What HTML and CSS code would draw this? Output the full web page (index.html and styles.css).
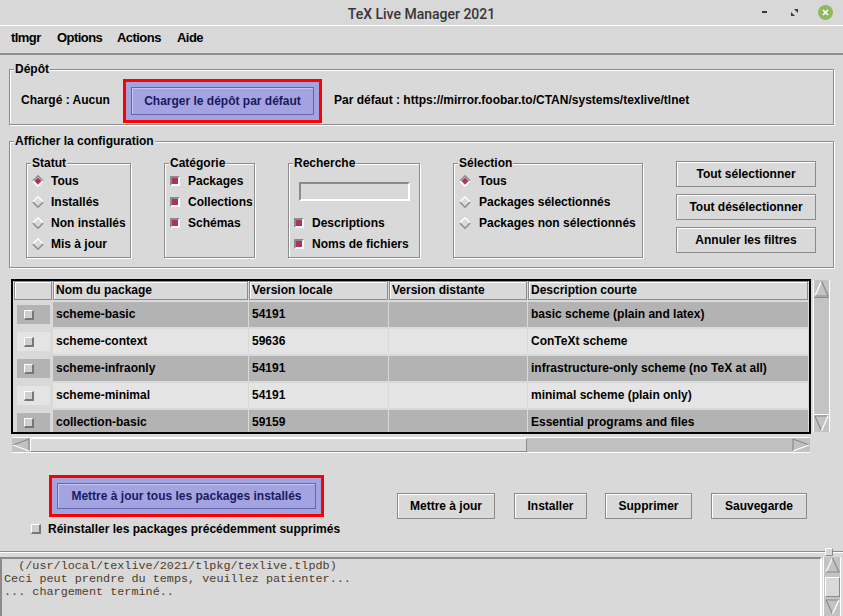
FILE: index.html
```html
<!DOCTYPE html>
<html lang="fr">
<head>
<meta charset="utf-8">
<title>TeX Live Manager 2021</title>
<link rel="stylesheet" href="styles.css">
</head>
<body>
<div class="titlebar">
  <span class="title">TeX Live Manager 2021</span>
  <div class="wm">
    <span class="wm-min"></span>
    <svg class="wm-max" width="7" height="7" viewBox="0 0 7 7"><path d="M3 0 H7 V4 Z M0 3 V7 H4 Z" fill="#3a3a3a"/></svg>
    <svg class="wm-close" width="15" height="15" viewBox="0 0 15 15"><circle cx="7.5" cy="7.5" r="7.5" fill="#8fb95f"/><path d="M5 5 L10 10 M10 5 L5 10" stroke="#fff" stroke-width="1.6"/></svg>
  </div>
</div>
<nav class="menubar">
  <span class="m1">tlmgr</span><span class="m2">Options</span><span class="m3">Actions</span><span class="m4">Aide</span>
</nav>
<main class="content">
  <section class="group depot">
    <span class="group-title">Dépôt</span>
    <div class="depot-row">
      <span class="loaded">Chargé : Aucun</span>
      <div class="hl hl-depot"><div class="btn-lav">Charger le dépôt par défaut</div></div>
      <span class="default-url">Par défaut : https://mirror.foobar.to/CTAN/systems/texlive/tlnet</span>
    </div>
  </section>

  <section class="group config">
    <span class="group-title">Afficher la configuration</span>
    <div class="config-row">
      <div class="group sub statut">
        <span class="group-title">Statut</span>
        <div class="opt"><svg class="radio" width="12" height="12" viewBox="0 0 12 12"><path d="M0.8 6 L6 0.8 L11.2 6" fill="none" stroke="#8a8a8a" stroke-width="1.4"/><path d="M0.8 6 L6 11.2 L11.2 6" fill="none" stroke="#fff" stroke-width="1.4"/><path d="M6 2.6 L9.4 6 L6 9.4 L2.6 6 Z" fill="#b03060"/></svg>Tous</div>
        <div class="opt"><svg class="radio" width="12" height="12" viewBox="0 0 12 12"><path d="M0.8 6 L6 0.8 L11.2 6" fill="none" stroke="#fff" stroke-width="1.4"/><path d="M0.8 6 L6 11.2 L11.2 6" fill="none" stroke="#8a8a8a" stroke-width="1.4"/></svg>Installés</div>
        <div class="opt"><svg class="radio" width="12" height="12" viewBox="0 0 12 12"><path d="M0.8 6 L6 0.8 L11.2 6" fill="none" stroke="#fff" stroke-width="1.4"/><path d="M0.8 6 L6 11.2 L11.2 6" fill="none" stroke="#8a8a8a" stroke-width="1.4"/></svg>Non installés</div>
        <div class="opt"><svg class="radio" width="12" height="12" viewBox="0 0 12 12"><path d="M0.8 6 L6 0.8 L11.2 6" fill="none" stroke="#fff" stroke-width="1.4"/><path d="M0.8 6 L6 11.2 L11.2 6" fill="none" stroke="#8a8a8a" stroke-width="1.4"/></svg>Mis à jour</div>
      </div>
      <div class="group sub categorie">
        <span class="group-title">Catégorie</span>
        <div class="opt opt-cb"><span class="cb"></span>Packages</div>
        <div class="opt opt-cb"><span class="cb"></span>Collections</div>
        <div class="opt opt-cb"><span class="cb"></span>Schémas</div>
      </div>
      <div class="group sub recherche">
        <span class="group-title">Recherche</span>
        <div class="entry-slot"><div class="entry"></div></div>
        <div class="opt opt-cb"><span class="cb"></span>Descriptions</div>
        <div class="opt opt-cb"><span class="cb"></span>Noms de fichiers</div>
      </div>
      <div class="group sub selection">
        <span class="group-title">Sélection</span>
        <div class="opt"><svg class="radio" width="12" height="12" viewBox="0 0 12 12"><path d="M0.8 6 L6 0.8 L11.2 6" fill="none" stroke="#8a8a8a" stroke-width="1.4"/><path d="M0.8 6 L6 11.2 L11.2 6" fill="none" stroke="#fff" stroke-width="1.4"/><path d="M6 2.6 L9.4 6 L6 9.4 L2.6 6 Z" fill="#b03060"/></svg>Tous</div>
        <div class="opt"><svg class="radio" width="12" height="12" viewBox="0 0 12 12"><path d="M0.8 6 L6 0.8 L11.2 6" fill="none" stroke="#fff" stroke-width="1.4"/><path d="M0.8 6 L6 11.2 L11.2 6" fill="none" stroke="#8a8a8a" stroke-width="1.4"/></svg>Packages sélectionnés</div>
        <div class="opt"><svg class="radio" width="12" height="12" viewBox="0 0 12 12"><path d="M0.8 6 L6 0.8 L11.2 6" fill="none" stroke="#fff" stroke-width="1.4"/><path d="M0.8 6 L6 11.2 L11.2 6" fill="none" stroke="#8a8a8a" stroke-width="1.4"/></svg>Packages non sélectionnés</div>
      </div>
      <div class="side-buttons">
        <div class="btn">Tout sélectionner</div>
        <div class="btn">Tout désélectionner</div>
        <div class="btn">Annuler les filtres</div>
      </div>
    </div>
  </section>

  <div class="table-area">
    <div class="table-frame">
      <div class="grid">
        <div class="th"></div>
        <div class="th">Nom du package</div>
        <div class="th">Version locale</div>
        <div class="th">Version distante</div>
        <div class="th">Description courte</div>

        <div class="td-cb dark"><span class="cbw"><span class="cb-off"></span></span></div>
        <div class="td dark">scheme-basic</div>
        <div class="td dark">54191</div>
        <div class="td dark"></div>
        <div class="td dark">basic scheme (plain and latex)</div>

        <div class="td-cb light"><span class="cbw"><span class="cb-off"></span></span></div>
        <div class="td light">scheme-context</div>
        <div class="td light">59636</div>
        <div class="td light"></div>
        <div class="td light">ConTeXt scheme</div>

        <div class="td-cb dark"><span class="cbw"><span class="cb-off"></span></span></div>
        <div class="td dark">scheme-infraonly</div>
        <div class="td dark">54191</div>
        <div class="td dark"></div>
        <div class="td dark">infrastructure-only scheme (no TeX at all)</div>

        <div class="td-cb light"><span class="cbw"><span class="cb-off"></span></span></div>
        <div class="td light">scheme-minimal</div>
        <div class="td light">54191</div>
        <div class="td light"></div>
        <div class="td light">minimal scheme (plain only)</div>

        <div class="td-cb dark"><span class="cbw"><span class="cb-off"></span></span></div>
        <div class="td dark">collection-basic</div>
        <div class="td dark">59159</div>
        <div class="td dark"></div>
        <div class="td dark">Essential programs and files</div>
      </div>
    </div>
    <div class="vscroll">
      <svg class="arrow" width="15" height="17" viewBox="0 0 15 17"><path d="M1 16 L7.5 1" stroke="#fff" stroke-width="1.2" fill="none"/><path d="M7.5 1 L14 16 L1 16" stroke="#8a8a8a" stroke-width="1.2" fill="none"/></svg>
      <div class="vthumb"></div>
      <svg class="arrow" width="15" height="17" viewBox="0 0 15 17"><path d="M1 1 L14 1 M1 1 L7.5 16" stroke="#8a8a8a" stroke-width="1.2" fill="none"/><path d="M7.5 16 L14 1" stroke="#fff" stroke-width="1.2" fill="none"/></svg>
    </div>
  </div>

  <div class="hscroll">
    <svg class="harrow" width="18" height="14" viewBox="0 0 18 14"><path d="M1 7 L17 1 L17 13" stroke="#8a8a8a" stroke-width="1.2" fill="none"/><path d="M1 7 L17 13" stroke="#fff" stroke-width="1.2" fill="none"/></svg>
    <div class="hthumb"></div>
    <div class="htrough"></div>
    <svg class="harrow" width="18" height="14" viewBox="0 0 18 14"><path d="M1 1 L17 7 M1 1 L1 13" stroke="#8a8a8a" stroke-width="1.2" fill="none"/><path d="M1 13 L17 7" stroke="#fff" stroke-width="1.2" fill="none"/></svg>
  </div>

  <div class="bottom">
    <div class="upd-col">
      <div class="hl hl-upd"><div class="btn-lav">Mettre à jour tous les packages installés</div></div>
      <div class="reinstall"><span class="cb-off"></span>Réinstaller les packages précédemment supprimés</div>
    </div>
    <div class="action-buttons">
      <div class="btn w-maj">Mettre à jour</div>
      <div class="btn w-inst">Installer</div>
      <div class="btn w-supp">Supprimer</div>
      <div class="btn w-sauv">Sauvegarde</div>
    </div>
  </div>
</main>
<div class="sep"><span class="sash"></span></div>
<div class="log-pane">
  <pre class="log">  (/usr/local/texlive/2021/tlpkg/texlive.tlpdb)
Ceci peut prendre du temps, veuillez patienter...
... chargement terminé..</pre>
  <div class="vscroll log-scroll">
    <svg class="arrow" width="15" height="16" viewBox="0 0 15 16"><path d="M1 15 L7.5 1" stroke="#fff" stroke-width="1.2" fill="none"/><path d="M7.5 1 L14 15 L1 15" stroke="#8a8a8a" stroke-width="1.2" fill="none"/></svg>
    <div class="lthumb"></div>
    <svg class="arrow" width="15" height="16" viewBox="0 0 15 16"><path d="M1 1 L14 1 M1 1 L7.5 15" stroke="#8a8a8a" stroke-width="1.2" fill="none"/><path d="M7.5 15 L14 1" stroke="#fff" stroke-width="1.2" fill="none"/></svg>
  </div>
</div>
</body>
</html>
```
FILE: styles.css
```css
* { box-sizing: border-box; }
html, body { margin: 0; padding: 0; }
body {
  width: 843px;
  height: 616px;
  overflow: hidden;
  background: #d9d9d9;
  color: #000;
  font: bold 12px/14px "Liberation Sans", Arial, sans-serif;
}

/* title bar */
.titlebar {
  height: 26px;
  display: grid;
  grid-template-columns: 1fr auto 1fr;
  align-items: center;
  background: #d8d8d8;
  border-bottom: 1px solid #fff;
}
.title {
  grid-column: 2;
  font: 500 14px/16px "Roboto", "DejaVu Sans", sans-serif;
  color: #363636;
  padding-top: 2px;
}
.wm {
  grid-column: 3;
  justify-self: end;
  display: flex;
  align-items: center;
  padding-right: 10px;
  padding-bottom: 1px;
}
.wm-min {
  width: 5px;
  height: 2px;
  background: #3a3a3a;
  margin-right: 24px;
}
.wm-max { margin-right: 20px; }

/* menubar */
.menubar {
  height: 29px;
  display: flex;
  align-items: center;
  padding: 0 0 3px 11px;
  border-bottom: 2px solid #8e8e8e;
  font: bold 13px/16px "Liberation Sans", Arial, sans-serif;
  letter-spacing: -0.55px;
}
.m1 { width: 46px; }
.m2 { width: 60px; }
.m3 { width: 60px; }

/* content */
.content { padding: 14px 9px 0 9px; }

.group {
  position: relative;
  border: 1px solid #8c8c8c;
  box-shadow: inset 1px 1px 0 #fff, 1px 1px 0 #fff;
}
.group-title {
  position: absolute;
  top: -8px;
  left: 4px;
  padding: 0 1px;
  background: #d9d9d9;
  line-height: 14px;
  white-space: nowrap;
}

.depot-row {
  height: 54px;
  padding: 9px 0 0 11px;
  display: flex;
  align-items: flex-start;
}
.loaded { width: 102px; margin-top: 14px; }
.default-url { margin-left: 12px; margin-top: 14px; white-space: nowrap; }

.hl {
  border: 3px solid #ff0000;
  background: #a3a3e1;
  padding: 5px;
  display: flex;
}
.hl-depot { width: 199px; height: 44px; }
.hl-upd { width: 275px; height: 42px; margin-left: 18px; }
.btn-lav {
  flex: 1;
  display: flex;
  align-items: center;
  justify-content: center;
  border: 1px solid #6464ac;
  box-shadow: inset 1px 1px 0 #c6c6f2;
  color: #1a1a5e;
  white-space: nowrap;
}

.config { margin-top: 16px; }
.config-row {
  display: flex;
  align-items: flex-start;
  gap: 33px;
  padding: 21px 0 9px 16px;
}
.sub { height: 95px; padding: 6px 0 3px 5px; }
.statut { width: 105px; }
.categorie { width: 91px; }
.recherche { width: 132px; }
.selection { width: 190px; }

.opt {
  height: 21px;
  display: flex;
  align-items: center;
  white-space: nowrap;
}
.radio { flex: none; margin-right: 7px; }
.selection .radio { margin-right: 8px; }
.cb {
  flex: none;
  width: 10px;
  height: 10px;
  margin-right: 8px;
  border: 2px solid;
  border-color: #8a8a8a #fff #fff #8a8a8a;
  background: #b03060;
}
.entry-slot {
  height: 42px;
  display: flex;
  align-items: center;
  padding-left: 5px;
}
.entry {
  width: 111px;
  height: 19px;
  border: 2px solid;
  border-color: #8a8a8a #fff #fff #8a8a8a;
}

.side-buttons {
  width: 140px;
  margin-top: -2px;
  display: flex;
  flex-direction: column;
  gap: 7px;
}
.btn {
  height: 26px;
  display: flex;
  align-items: center;
  justify-content: center;
  border: 1px solid #8a8a8a;
  box-shadow: inset 1px 1px 0 #fff;
  white-space: nowrap;
}

/* table */
.table-area {
  margin-top: 11px;
  display: flex;
  align-items: flex-start;
}
.table-frame {
  width: 800px;
  height: 155px;
  margin-left: 2px;
  border: 2px solid #000;
  overflow: hidden;
}
.grid {
  display: grid;
  grid-template-columns: 38px 195px 139px 138px 280px;
  grid-template-rows: 19px;
  grid-auto-rows: 25px;
  column-gap: 1px;
  row-gap: 2px;
  padding: 0 1px;
}
.th {
  border: 1px solid #8c8c8c;
  box-shadow: inset 1px 1px 0 #fff;
  padding-left: 2px;
  padding-bottom: 1px;
  display: flex;
  align-items: center;
  white-space: nowrap;
}
.td {
  display: flex;
  align-items: center;
  padding-left: 3px;
  padding-bottom: 1px;
  white-space: nowrap;
}
.dark { background: #b3b3b3; }
.light { background: #e4e4e4; }
.td-cb {
  background: #d9d9d9 !important;
  display: flex;
  align-items: center;
  justify-content: center;
}
.cbw {
  width: 33px;
  height: 19px;
  display: flex;
  align-items: center;
  padding-left: 7px;
}
.dark .cbw { background: #b3b3b3; }
.light .cbw { background: #e4e4e4; }
.cb-off {
  flex: none;
  width: 10px;
  height: 10px;
  border: 1px solid;
  border-width: 1px 2px 2px 1px;
  border-color: #fff #777 #777 #fff;
  background: #cfcfcf;
}

.vscroll {
  width: 17px;
  height: 152px;
  margin: 1px 0 0 2px;
  display: flex;
  flex-direction: column;
  align-items: center;
  background: #c3c3c3;
  border-left: 1px solid #fff;
  border-right: 1px solid #fff;
}
.arrow { flex: none; display: block; }
.vthumb {
  flex: 1;
  width: 15px;
  border-top: 1px solid #8a8a8a;
  border-bottom: 1px solid #fff;
}

.hscroll {
  width: 798px;
  height: 16px;
  margin: 3px 0 0 3px;
  display: flex;
  align-items: center;
  background: #c1c1c1;
  border-top: 1px solid #fff;
  border-bottom: 1px solid #fff;
}
.harrow { flex: none; display: block; }
.hthumb {
  width: 497px;
  height: 14px;
  background: #d9d9d9;
  border: 1px solid;
  border-color: #fff #8a8a8a #8a8a8a #fff;
}
.htrough { flex: 1; }

/* bottom */
.bottom {
  height: 76px;
  margin-top: 22px;
  display: flex;
  align-items: flex-start;
  padding-left: 22px;
}
.upd-col { display: flex; flex-direction: column; }
.reinstall {
  height: 14px;
  margin-top: 5px;
  display: flex;
  align-items: center;
  white-space: nowrap;
}
.reinstall .cb-off { margin-right: 7px; }
.action-buttons {
  margin-left: auto;
  margin-right: 27px;
  margin-top: 18px;
  display: flex;
  gap: 19px;
}
.w-maj { width: 98px; }
.w-inst { width: 73px; margin-right: -1px; }
.w-supp { width: 87px; }
.w-sauv { width: 96px; }

.sep {
  position: relative;
  height: 2px;
  border-top: 1px solid #8a8a8a;
  border-bottom: 1px solid #fff;
}
.sash {
  position: absolute;
  right: 10px;
  top: -4px;
  width: 8px;
  height: 8px;
  background: #d9d9d9;
  border: 1px solid;
  border-color: #fff #8a8a8a #8a8a8a #fff;
}

.log-pane {
  margin-top: 4px;
  display: flex;
  align-items: flex-start;
}
.log {
  margin: 0;
  width: 822px;
  height: 64px;
  border: 2px solid;
  border-color: #8a8a8a #fff #fff #8a8a8a;
  padding: 1px 0 0 2px;
  font: 11.8px/13px "Liberation Mono", "Courier New", monospace;
  color: #4f3c2a;
  overflow: hidden;
}
.log-scroll {
  width: 18px;
  height: 62px;
  margin: 0 0 0 1px;
}
.lthumb {
  width: 15px;
  height: 20px;
  margin: 4px 0 2px;
  border: 1px solid;
  border-color: #fff #8a8a8a #8a8a8a #fff;
  background: #d9d9d9;
}
```
